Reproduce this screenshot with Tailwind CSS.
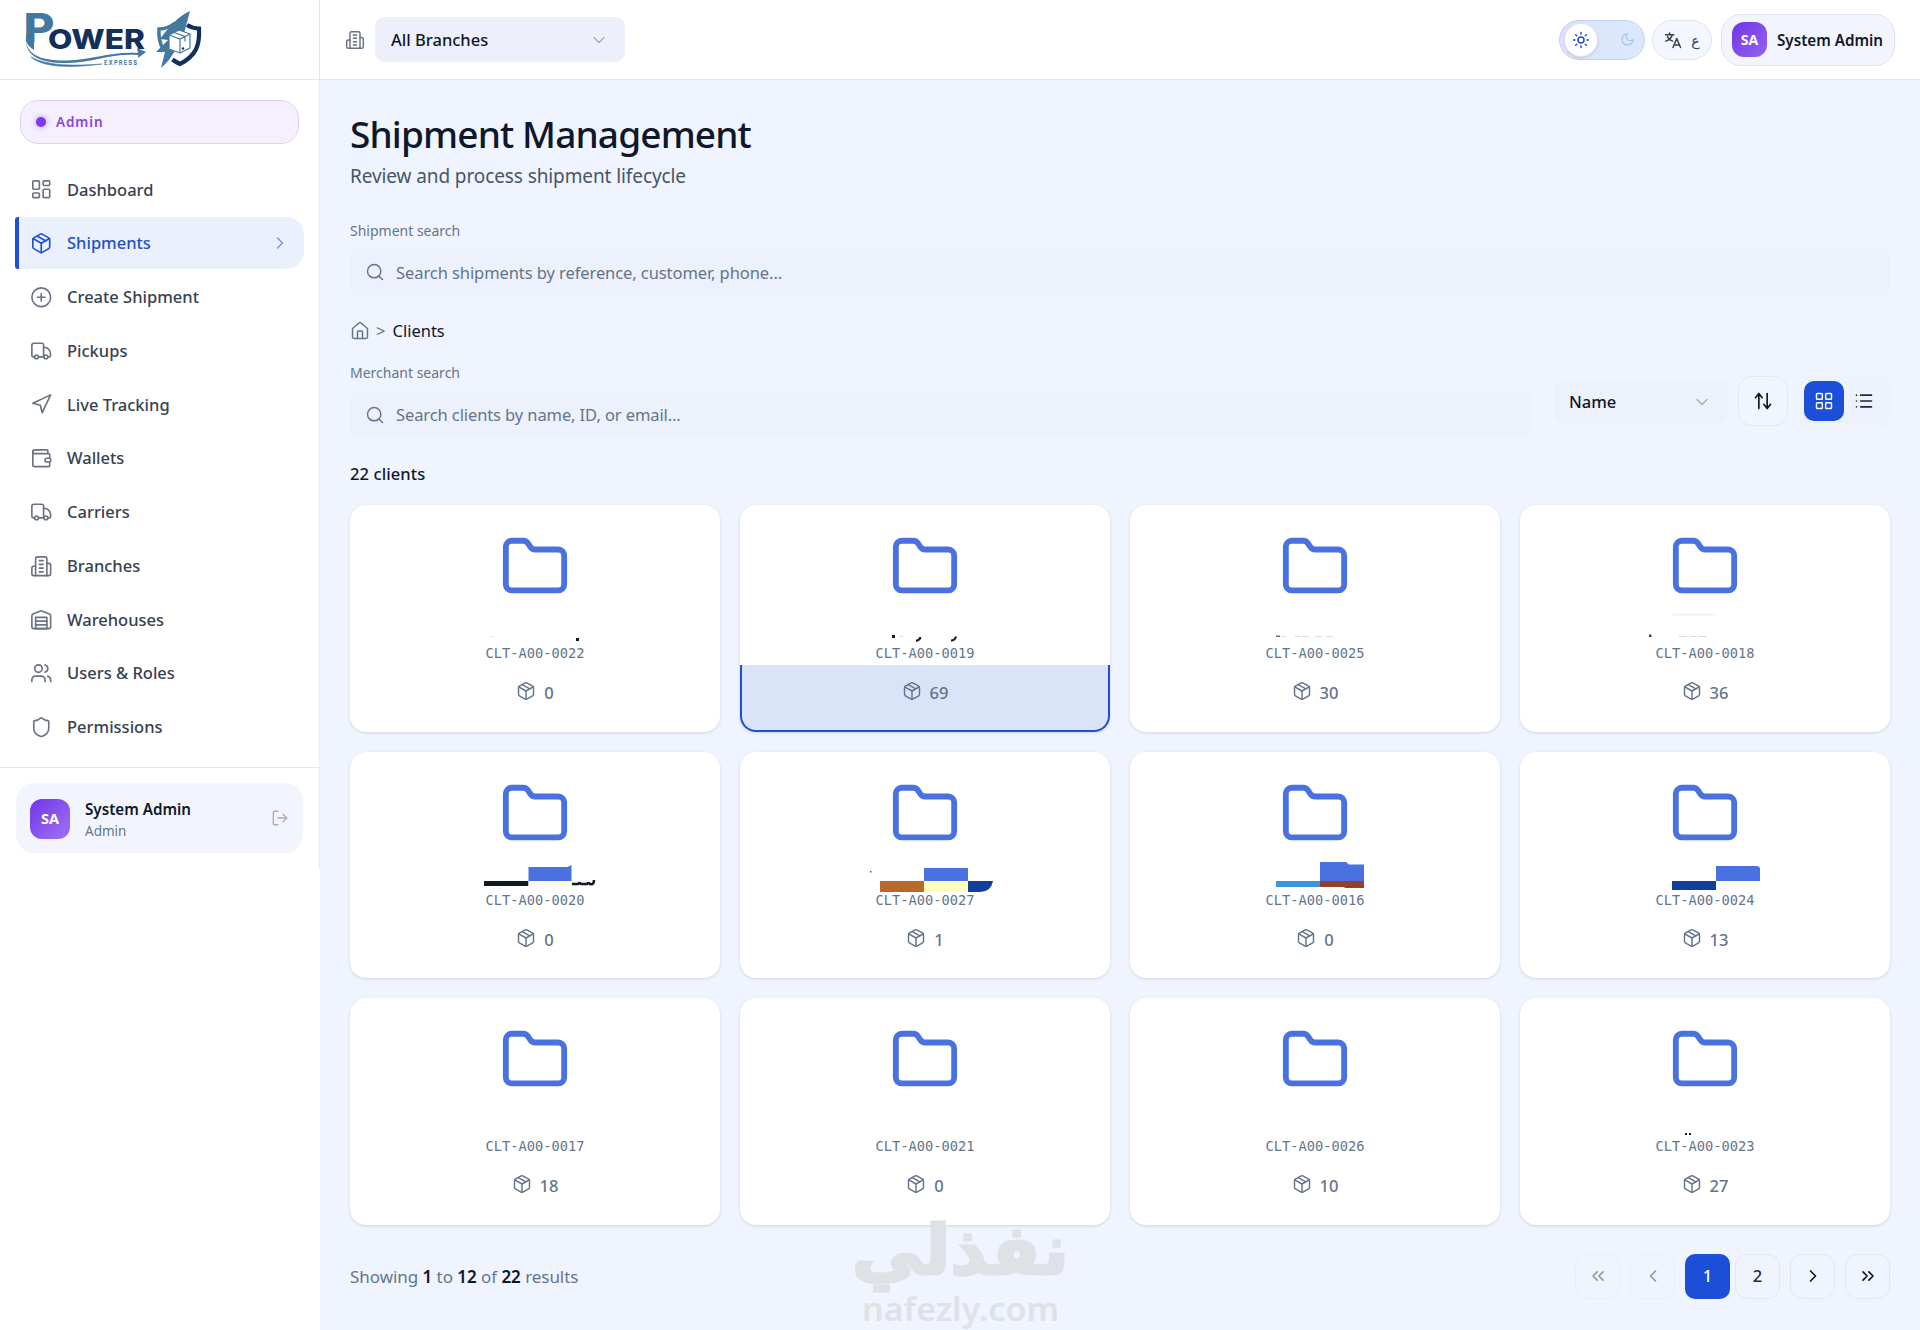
<!DOCTYPE html>
<html lang="en">
<head>
    <meta charset="UTF-8">
    <title>Shipment Management</title>
    <script src="https://cdn.jsdelivr.net/npm/@tailwindcss/browser@4"></script>
</head>
<body class="bg-[#eff4ff] h-[1330px] overflow-hidden flex font-['Noto_Sans','Open_Sans',sans-serif] text-[#0f172a]">

<!-- icon sprite -->
<svg class="hidden">
    <symbol id="i-dashboard" viewBox="0 0 24 24"><rect x="3" y="3" width="7" height="9" rx="1"/><rect x="14" y="3" width="7" height="5" rx="1"/><rect x="14" y="12" width="7" height="9" rx="1"/><rect x="3" y="16" width="7" height="5" rx="1"/></symbol>
    <symbol id="i-package" viewBox="0 0 24 24"><path d="M11 21.73a2 2 0 0 0 2 0l7-4A2 2 0 0 0 21 16V8a2 2 0 0 0-1-1.73l-7-4a2 2 0 0 0-2 0l-7 4A2 2 0 0 0 3 8v8a2 2 0 0 0 1 1.73z"/><path d="M12 22V12"/><path d="M3.3 7 12 12l8.7-5"/><path d="m7.5 4.27 9 5.15"/></symbol>
    <symbol id="i-plus" viewBox="0 0 24 24"><circle cx="12" cy="12" r="10"/><path d="M8 12h8M12 8v8"/></symbol>
    <symbol id="i-truck" viewBox="0 0 24 24"><path d="M5 18H3.5A1.5 1.5 0 0 1 2 16.500V5.500a2 2 0 0 1 2-2h8.500a2 2 0 0 1 2 2V18"/><path d="M9 18h6"/><path d="M14.500 8H17c3 1 5 4.500 5 8.500 0 1-.5 1.500-1.500 1.500H19"/><circle cx="7" cy="18" r="2"/><circle cx="17" cy="18" r="2"/></symbol>
    <symbol id="i-nav" viewBox="0 0 24 24"><path d="M3 11 22 2l-9 19-2-8-8-2z"/></symbol>
    <symbol id="i-wallet" viewBox="0 0 24 24"><path d="M19 7V4a1 1 0 0 0-1-1H5a2 2 0 0 0 0 4h15a1 1 0 0 1 1 1v4h-3a2 2 0 0 0 0 4h3a1 1 0 0 0 1-1v-2a1 1 0 0 0-1-1"/><path d="M3 5v14a2 2 0 0 0 2 2h15a1 1 0 0 0 1-1v-4"/></symbol>
    <symbol id="i-building" viewBox="0 0 24 24"><path d="M6 22V4a2 2 0 0 1 2-2h8a2 2 0 0 1 2 2v18Z"/><path d="M6 12H4a2 2 0 0 0-2 2v6a2 2 0 0 0 2 2h2"/><path d="M18 9h2a2 2 0 0 1 2 2v9a2 2 0 0 1-2 2h-2"/><path d="M10 6h4M10 10h4M10 14h4M10 18h4"/></symbol>
    <symbol id="i-warehouse" viewBox="0 0 24 24"><path d="M22 8.350V20a2 2 0 0 1-2 2H4a2 2 0 0 1-2-2V8.350A2 2 0 0 1 3.260 6.500l8-3.200a2 2 0 0 1 1.480 0l8 3.200A2 2 0 0 1 22 8.350Z"/><path d="M6 18h12M6 14h12"/><rect x="6" y="10" width="12" height="12"/></symbol>
    <symbol id="i-users" viewBox="0 0 24 24"><path d="M16 21v-2a4 4 0 0 0-4-4H6a4 4 0 0 0-4 4v2"/><circle cx="9" cy="7" r="4"/><path d="M22 21v-2a4 4 0 0 0-3-3.870"/><path d="M16 3.130a4 4 0 0 1 0 7.750"/></symbol>
    <symbol id="i-shield" viewBox="0 0 24 24"><path d="M20 13c0 5-3.500 7.500-7.660 8.950a1 1 0 0 1-.67-.01C7.500 20.500 4 18 4 13V6a1 1 0 0 1 1-1c2 0 4.500-1.200 6.240-2.720a1.170 1.170 0 0 1 1.520 0C14.510 3.810 17 5 19 5a1 1 0 0 1 1 1z"/></symbol>
    <symbol id="i-logout" viewBox="0 0 24 24"><path d="M9 21H5a2 2 0 0 1-2-2V5a2 2 0 0 1 2-2h4"/><path d="m16 17 5-5-5-5"/><path d="M21 12H9"/></symbol>
    <symbol id="i-right" viewBox="0 0 24 24"><path d="m9 18 6-6-6-6"/></symbol>
    <symbol id="i-left" viewBox="0 0 24 24"><path d="m15 18-6-6 6-6"/></symbol>
    <symbol id="i-rights" viewBox="0 0 24 24"><path d="m6 17 5-5-5-5M13 17l5-5-5-5"/></symbol>
    <symbol id="i-lefts" viewBox="0 0 24 24"><path d="m11 17-5-5 5-5M18 17l-5-5 5-5"/></symbol>
    <symbol id="i-down" viewBox="0 0 24 24"><path d="m6 9 6 6 6-6"/></symbol>
    <symbol id="i-search" viewBox="0 0 24 24"><circle cx="11" cy="11" r="8"/><path d="m21 21-4.300-4.300"/></symbol>
    <symbol id="i-home" viewBox="0 0 24 24"><path d="M15 21v-8a1 1 0 0 0-1-1h-4a1 1 0 0 0-1 1v8"/><path d="M3 10a2 2 0 0 1 .7-1.530l7-6a2 2 0 0 1 2.600 0l7 6A2 2 0 0 1 21 10v9a2 2 0 0 1-2 2H5a2 2 0 0 1-2-2z"/></symbol>
    <symbol id="i-folder" viewBox="0 0 24 24"><path d="M20 20a2 2 0 0 0 2-2V8a2 2 0 0 0-2-2h-7.900a2 2 0 0 1-1.690-.9L9.600 3.900A2 2 0 0 0 7.930 3H4a2 2 0 0 0-2 2v13a2 2 0 0 0 2 2Z"/></symbol>
    <symbol id="i-sun" viewBox="0 0 24 24"><circle cx="12" cy="12" r="4"/><path d="M12 2v2M12 20v2M4.930 4.930l1.410 1.410M17.660 17.660l1.410 1.410M2 12h2M20 12h2M6.340 17.660l-1.410 1.410M19.070 4.930l-1.410 1.410"/></symbol>
    <symbol id="i-moon" viewBox="0 0 24 24"><path d="M12 3a6 6 0 0 0 9 9 9 9 0 1 1-9-9Z"/></symbol>
    <symbol id="i-translate" viewBox="0 0 24 24"><path d="M2 5h11M7.500 2.500V5M11 5c-1 4-4 7-8.500 8.500M4.500 7.500c1.500 3 4 5 7 6"/><path d="m12 22 5-12 5 12M13.700 18.500h6.600"/></symbol>
    <symbol id="i-sort" viewBox="0 0 24 24"><path d="m3 8 4-5 4 5M7 3v18M13 16l4 5 4-5M17 21V3"/></symbol>
    <symbol id="i-grid" viewBox="0 0 24 24"><rect x="3" y="3" width="7" height="7" rx="1"/><rect x="14" y="3" width="7" height="7" rx="1"/><rect x="14" y="14" width="7" height="7" rx="1"/><rect x="3" y="14" width="7" height="7" rx="1"/></symbol>
    <symbol id="i-list" viewBox="0 0 24 24"><path d="M8 5h13M8 12h13M8 19h13M3 5h.01M3 12h.01M3 19h.01"/></symbol>
</svg>

<aside class="w-80 shrink-0 bg-white flex flex-col">
    <div class="h-20 shrink-0 border-b border-r border-[#e1e5ec] pl-6">
        <svg class="w-[184px] h-[76px]" viewBox="24 0 184 76">
            <text x="23.500" y="42" font-family="Inter, sans-serif" font-weight="800" font-size="40" fill="#43789f" textLength="31" lengthAdjust="spacingAndGlyphs">P</text>
            <path d="M26 35h8v15c-5-3-8-7-8-11z" fill="#43789f"/>
            <text x="48" y="48.500" font-family="Inter, sans-serif" font-weight="800" font-size="27.500" fill="#12305c" textLength="97" lengthAdjust="spacingAndGlyphs">OWER</text>
            <path d="M26 40c1 17 20 21 41 20.500 26-.5 42-9 71-7.500l-1-5 9 4-8 6 .3-3C110 53 94 62.500 68 63 44 63.500 26 58 26 40z" fill="#43789f"/>
            <path d="M31 57c12 11 42 11 71 7-28 2-55 2-71-7z" stroke="#43789f" stroke-width=".6" fill="#43789f"/>
            <text x="104" y="64.500" font-family="Inter, sans-serif" font-weight="700" font-size="5.800" fill="#43789f" textLength="33">EXPRESS</text>
            <path d="M163 49c-4-7-4.500-13-4-20 6 0 11-2 16-6" fill="none" stroke="#43789f" stroke-width="3.500"/>
            <path d="M187 25c4 2.500 7 3.500 12 3.500 1 17-3 27-19 35.500-3-1.500-5-2.500-7.500-4.500" fill="none" stroke="#12305c" stroke-width="4.200"/>
            <path d="M190 11c-12 5-22 17-30 28l8 1-12 12h9l-4 16c7-6 11-12 15-19h-7l4-12h10z" fill="#43789f"/>
            <path d="m169 35 10-5 11 4v14l-10 5-11-4z" fill="#fff" stroke="#43789f" stroke-width="1.200" stroke-linejoin="round"/>
            <path d="m169 35 11 4 10-5M180 39v14M174 32.500l11 4v5" fill="none" stroke="#43789f" stroke-width="1.200"/>
            <circle cx="183" cy="48.500" r="1.200" fill="#12305c"/>
        </svg>
    </div>

    <div class="h-[789px] shrink-0 border-r border-[#e8ebf1] flex flex-col">
        <div class="mx-5 mt-5 h-11 shrink-0 rounded-[18px] border border-[#dcd3f3] bg-[#f5effe] flex items-center pl-[15px] gap-[10px]">
            <span class="size-[10px] rounded-full bg-[#7c3aed] shadow-[0_0_6px_#b794f6]"></span>
            <span class="text-[13.500px] font-semibold tracking-[0.9px] text-[#8745d8]">Admin</span>
        </div>

        <nav id="nav" class="mt-[19.500px] px-[15px] flex flex-col gap-[1.750px]"></nav>

        <div class="mt-[14px] border-t border-[#e1e5ec] px-4 pt-[15px]">
            <div class="h-[70px] rounded-[18px] bg-[#f2f5fe] flex items-center pl-[14px] pr-[14px]">
                <span class="mt-[2px] size-10 rounded-[12px] bg-linear-to-br from-[#7234e4] to-[#a070f5] text-white text-[14.500px] font-bold flex items-center justify-center">SA</span>
                <div class="ml-[15px] mt-[3px] flex-grow">
                    <div class="text-[15.200px] leading-[22px] font-semibold whitespace-nowrap">System Admin</div>
                    <div class="text-[13.500px] leading-[22px] text-[#64748b]">Admin</div>
                </div>
                <svg class="size-[18px] fill-none stroke-[#a3adbd] stroke-[1.750]" stroke-linecap="round" stroke-linejoin="round"><use href="#i-logout"/></svg>
            </div>
        </div>
    </div>
</aside>

<div class="flex-grow flex flex-col">
    <header class="h-20 shrink-0 bg-white border-b border-[#e1e5ec] flex items-center pl-[25px] pr-[25px]">
        <svg class="size-5 fill-none stroke-[#6b7280] stroke-[1.750]" stroke-linecap="round" stroke-linejoin="round"><use href="#i-building"/></svg>
        <div class="ml-[10px] w-[250px] h-[45px] rounded-[10px] bg-[#edf0fb] flex items-center justify-between pl-4 pr-4">
            <span class="pt-[2px] text-[16.500px] font-medium">All Branches</span>
            <svg class="size-5 fill-none stroke-[#a8b0bf] stroke-[1.750]" stroke-linecap="round" stroke-linejoin="round"><use href="#i-down"/></svg>
        </div>

        <div class="ml-auto w-[86px] h-10 rounded-full border border-[#bfd2f3] bg-linear-to-r from-[#e4dffa] via-[#dbe7fb] to-[#dbe9fd] flex items-center justify-between pl-1 pr-[9px]">
            <span class="size-[34px] rounded-full bg-white border border-[#dde5f5] shadow-sm flex items-center justify-center">
                <svg class="size-[18px] fill-none stroke-[#1f4fc0] stroke-2" stroke-linecap="round" stroke-linejoin="round"><use href="#i-sun"/></svg>
            </span>
            <svg class="size-[15px] fill-none stroke-[#a9c4f2] stroke-2" stroke-linecap="round" stroke-linejoin="round"><use href="#i-moon"/></svg>
        </div>
        <div class="ml-[7px] w-[60px] h-10 rounded-[20px] border border-[#e0e5f2] bg-[#f5f7fe] flex items-center justify-center gap-[9px] text-[#334155]">
            <svg class="size-[18px] fill-none stroke-current stroke-2" stroke-linecap="round" stroke-linejoin="round"><use href="#i-translate"/></svg>
            <span class="pt-[2px] text-[14px] leading-5 font-['DejaVu_Sans',sans-serif]">ع</span>
        </div>
        <div class="ml-[9px] w-[174px] h-[52px] rounded-[20px] border border-[#dfe4f2] bg-[#f2f5fe] flex items-center pl-[10px] gap-[10px]">
            <span class="size-[35px] shrink-0 rounded-[12px] bg-linear-to-br from-[#7234e4] to-[#9560f2] text-white text-[14px] font-bold flex items-center justify-center">SA</span>
            <span class="pt-px text-[15.200px] font-semibold whitespace-nowrap">System Admin</span>
        </div>
    </header>

    <main class="pl-[30px] pr-[30px] flex flex-col">
        <h1 class="mt-[29px] text-[37px] leading-[50px] font-medium tracking-[-0.85px]">Shipment Management</h1>
        <p class="mt-[3px] text-[19px] leading-7 tracking-[-0.1px] text-[#475569]">Review and process shipment lifecycle</p>

        <label class="mt-[31px] text-[14px] leading-5 text-[#64748b]">Shipment search</label>
        <div class="mt-[7px] h-12 rounded-[10px] bg-[#edf1fc] flex items-center pl-[15px] gap-[11px]">
            <svg class="size-5 fill-none stroke-[#64748b] stroke-[1.750]" stroke-linecap="round" stroke-linejoin="round"><use href="#i-search"/></svg>
            <span class="pt-[2px] text-[16.500px] tracking-[-0.08px] text-[#64748b]">Search shipments by reference, customer, phone...</span>
        </div>

        <div class="mt-[24px] h-[22px] flex items-center text-[16.500px]">
            <svg class="size-5 fill-none stroke-[#64748b] stroke-[1.750]" stroke-linecap="round" stroke-linejoin="round"><use href="#i-home"/></svg>
            <span class="ml-[6px] text-[#64748b]">&gt;</span>
            <span class="ml-[7px]">Clients</span>
        </div>

        <div class="mt-[21px] flex">
            <div class="flex-grow flex flex-col">
                <label class="text-[14px] leading-5 text-[#64748b]">Merchant search</label>
                <div class="mt-[8px] h-[47px] rounded-[10px] bg-[#edf1fc] flex items-center pl-[15px] gap-[11px]">
                    <svg class="size-5 fill-none stroke-[#64748b] stroke-[1.750]" stroke-linecap="round" stroke-linejoin="round"><use href="#i-search"/></svg>
                    <span class="pt-[2px] text-[16.500px] tracking-[-0.1px] text-[#64748b]">Search clients by name, ID, or email...</span>
                </div>
            </div>
            <div class="ml-[22px] mt-[13px] flex items-start">
                <div class="mt-[4px] w-[174px] h-11 rounded-[10px] bg-[#edf1fc] flex items-center justify-between pl-[15px] pr-[16px]">
                    <span class="pt-px text-[16.500px] font-medium">Name</span>
                    <svg class="size-5 fill-none stroke-[#a8b0bf] stroke-[1.750]" stroke-linecap="round" stroke-linejoin="round"><use href="#i-down"/></svg>
                </div>
                <div class="ml-[10px] size-[50px] rounded-[14px] border border-[#e1e7f4] bg-[#f1f5ff] flex items-center justify-center">
                    <svg class="size-5 fill-none stroke-[#0f172a] stroke-2" stroke-linecap="round" stroke-linejoin="round"><use href="#i-sort"/></svg>
                </div>
                <div class="ml-[11px] w-[91px] h-[54px] rounded-[10px] bg-[#edf2fd] flex items-start pt-[5px] pl-[5px]">
                    <span class="size-10 rounded-[10px] bg-[#1d4ed8] flex items-center justify-center">
                        <svg class="size-5 fill-none stroke-white stroke-[1.750]" stroke-linecap="round" stroke-linejoin="round"><use href="#i-grid"/></svg>
                    </span>
                    <span class="size-10 flex items-center justify-center">
                        <svg class="size-5 fill-none stroke-[#1e293b] stroke-2" stroke-linecap="round" stroke-linejoin="round"><use href="#i-list"/></svg>
                    </span>
                </div>
            </div>
        </div>

        <div class="mt-[24px] text-[16.500px] leading-6 font-medium tracking-[0.1px]">22 clients</div>

        <div id="clients" class="mt-[19px] grid grid-cols-4 gap-5"></div>

        <div class="mt-[29px] flex items-center">
            <p class="flex-grow pt-[2px] text-[17px] tracking-[-0.05px] text-[#64748b]">Showing <b class="font-semibold text-[#0f172a]">1</b> to <b class="font-semibold text-[#0f172a]">12</b> of <b class="font-semibold text-[#0f172a]">22</b> results</p>
            <div class="flex gap-[10px]">
                <button class="size-[45px] rounded-[12px] border border-[#e8eefa] flex items-center justify-center text-[#8f98a8]"><svg class="size-5 fill-none stroke-current stroke-2" stroke-linecap="round" stroke-linejoin="round"><use href="#i-lefts"/></svg></button>
                <button class="size-[45px] rounded-[12px] border border-[#e8eefa] flex items-center justify-center text-[#8f98a8]"><svg class="size-5 fill-none stroke-current stroke-2" stroke-linecap="round" stroke-linejoin="round"><use href="#i-left"/></svg></button>
                <div class="flex gap-[5px] text-[16.500px] font-medium">
                    <button class="size-[45px] rounded-[10px] bg-[#1d4ed8] pt-px text-white">1</button>
                    <button class="size-[45px] rounded-[12px] border border-[#e1e7f4] pt-px text-[#1e293b]">2</button>
                </div>
                <button class="size-[45px] rounded-[12px] border border-[#e1e7f4] flex items-center justify-center text-[#0f172a]"><svg class="size-5 fill-none stroke-current stroke-2" stroke-linecap="round" stroke-linejoin="round"><use href="#i-right"/></svg></button>
                <button class="size-[45px] rounded-[12px] border border-[#e1e7f4] flex items-center justify-center text-[#0f172a]"><svg class="size-5 fill-none stroke-current stroke-2" stroke-linecap="round" stroke-linejoin="round"><use href="#i-rights"/></svg></button>
            </div>
        </div>
    </main>
</div>

<!-- watermark -->
<svg class="absolute left-[840px] top-[1190px] w-[240px] h-[140px] fill-[#dee2e6]" viewBox="0 0 240 140">
    <text x="229" y="84" direction="rtl" font-family="DejaVu Sans" font-weight="700" font-size="68" stroke="#dee2e6" stroke-width="3" textLength="217" lengthAdjust="spacingAndGlyphs">نفذلي</text>
    <text x="22" y="131" font-family="Noto Sans" font-weight="600" font-size="33" textLength="197" lengthAdjust="spacingAndGlyphs">nafezly.com</text>
</svg>

<script>
    const navItems = [
        {icon: "dashboard", label: "Dashboard"},
        {icon: "package", label: "Shipments", active: true},
        {icon: "plus", label: "Create Shipment"},
        {icon: "truck", label: "Pickups"},
        {icon: "nav", label: "Live Tracking"},
        {icon: "wallet", label: "Wallets"},
        {icon: "truck", label: "Carriers"},
        {icon: "building", label: "Branches"},
        {icon: "warehouse", label: "Warehouses"},
        {icon: "users", label: "Users & Roles"},
        {icon: "shield", label: "Permissions"}
    ];

    document.getElementById("nav").innerHTML = navItems.map(function (item) {
        const state = item.active
            ? "bg-[#eaf0fc] border-[#1d4ed8] text-[#1f4fc8]"
            : "border-transparent text-[#374151]";
        const iconColor = item.active ? "stroke-[#1d4ed8]" : "stroke-[#6b7280]";
        const chevron = item.active
            ? `<svg class="ml-auto mr-[14px] size-5 fill-none stroke-[#7d96e6] stroke-[1.750]" stroke-linecap="round" stroke-linejoin="round"><use href="#i-right"/></svg>`
            : "";
        return `<a class="h-[52px] rounded-r-[18px] rounded-l-[3px] border-l-4 flex items-center pl-[11px] ${state}">
            <svg class="size-[22.500px] fill-none stroke-[1.750] ${iconColor}" stroke-linecap="round" stroke-linejoin="round"><use href="#i-${item.icon}"/></svg>
            <span class="ml-[14.500px] pt-px text-[16.500px] font-medium">${item.label.replace("&", "&amp;")}</span>
            ${chevron}
        </a>`;
    }).join("");

    // mask: leftovers of the redacted client name
    const clients = [
        {code: "CLT-A00-0022", count: 0, mask: `<rect x="121" y="28" width="3" height="3" fill="#111827"/><rect x="35" y="26" width="4" height="1" fill="#e5e7eb"/>`},
        {code: "CLT-A00-0019", count: 69, selected: true, mask: `<rect x="47" y="25" width="3" height="3" fill="#111827"/><path d="M71 31q4-1 4.500-4" fill="none" stroke="#111827" stroke-width="2"/><path d="M106 30.500q4 0 5-4" fill="none" stroke="#111827" stroke-width="2"/><rect x="55" y="26" width="3" height="1" fill="#d1d5db"/>`},
        {code: "CLT-A00-0025", count: 30, mask: `<rect x="41" y="25.500" width="4" height="1.500" fill="#6b7280"/><path d="M46 26.500h5m9 0h5m2 0h7m6 0h8m3 0h7" stroke="#d9dce1"/>`},
        {code: "CLT-A00-0018", count: 36, mask: `<rect x="24" y="24.500" width="2.500" height="2.500" fill="#374151"/><path d="M54 26.500h8m3 0h6m2 0h9" stroke="#d9dce1"/><rect x="47" y="3" width="44" height="3" rx="1" fill="#f2f4fe"/>`},
        {code: "CLT-A00-0020", count: 0, mask: `<rect x="29" y="24" width="44.500" height="5" fill="#111827"/><path d="M73.500 10h39l4-2v16h-43z" fill="#4a71e0"/><rect x="73.500" y="24" width="43" height="5" fill="#fffde8"/><path d="M117 27h6q1-2 3 0h6q1-2 3 0 4 1 4-4" fill="none" stroke="#111827" stroke-width="2.500"/>`},
        {code: "CLT-A00-0027", count: 1, mask: `<rect x="35" y="24" width="44" height="11" fill="#b9692c"/><rect x="79" y="11" width="44" height="13" fill="#4a71e0"/><rect x="79" y="24" width="44" height="11" fill="#ffffc0"/><path d="M123 24h25q-2 11-13 11h-12z" fill="#113f9c"/><rect x="25" y="14" width="1.500" height="1.500" fill="#4b5563"/>`},
        {code: "CLT-A00-0016", count: 0, mask: `<rect x="41" y="24" width="44" height="6" fill="#3b96e2"/><path d="M85 5h26l3 2.500h15V24H85z" fill="#4a71e0"/><path d="M85 24h44v7h-18l-3-1H85z" fill="#93402c"/>`},
        {code: "CLT-A00-0024", count: 13, mask: `<rect x="47" y="24" width="44" height="9" fill="#113f9c"/><path d="M91 9h42l2 2v13H91z" fill="#4a71e0"/>`},
        {code: "CLT-A00-0017", count: 18, mask: ""},
        {code: "CLT-A00-0021", count: 0, mask: ""},
        {code: "CLT-A00-0026", count: 10, mask: ""},
        {code: "CLT-A00-0023", count: 27, mask: `<rect x="60" y="30" width="2" height="2" fill="#111827"/><rect x="64" y="30" width="2" height="2" fill="#111827"/>`}
    ];

    document.getElementById("clients").innerHTML = clients.map(function (client) {
        const footer = client.selected
            ? "border-2 border-t-0 border-[#1d4ed8] bg-[#dae4f8]"
            : "border-2 border-t-0 border-transparent";
        return `<div class="h-[226.500px] rounded-[16px] bg-white shadow-[0_1px_3px_rgba(15,23,42,0.14)] flex flex-col items-center pt-[27px]">
            <svg class="size-[70px] shrink-0 fill-none stroke-[#4a71e0] stroke-2" stroke-linecap="round" stroke-linejoin="round"><use href="#i-folder"/></svg>
            <svg class="mt-2 w-[160px] h-[35px] shrink-0">${client.mask}</svg>
            <div class="h-4 shrink-0 text-[13.700px] leading-4 text-[#64748b] font-['DejaVu_Sans_Mono',monospace]">${client.code}</div>
            <div class="mt-[4px] w-full flex-grow rounded-b-[16px] flex justify-center pt-[16px] gap-[8px] text-[#64748b] ${footer}">
                <svg class="size-5 fill-none stroke-current stroke-[1.750]" stroke-linecap="round" stroke-linejoin="round"><use href="#i-package"/></svg>
                <span class="pt-px text-[16.500px] leading-[21px] font-medium">${client.count}</span>
            </div>
        </div>`;
    }).join("");
</script>

</body>
</html>
